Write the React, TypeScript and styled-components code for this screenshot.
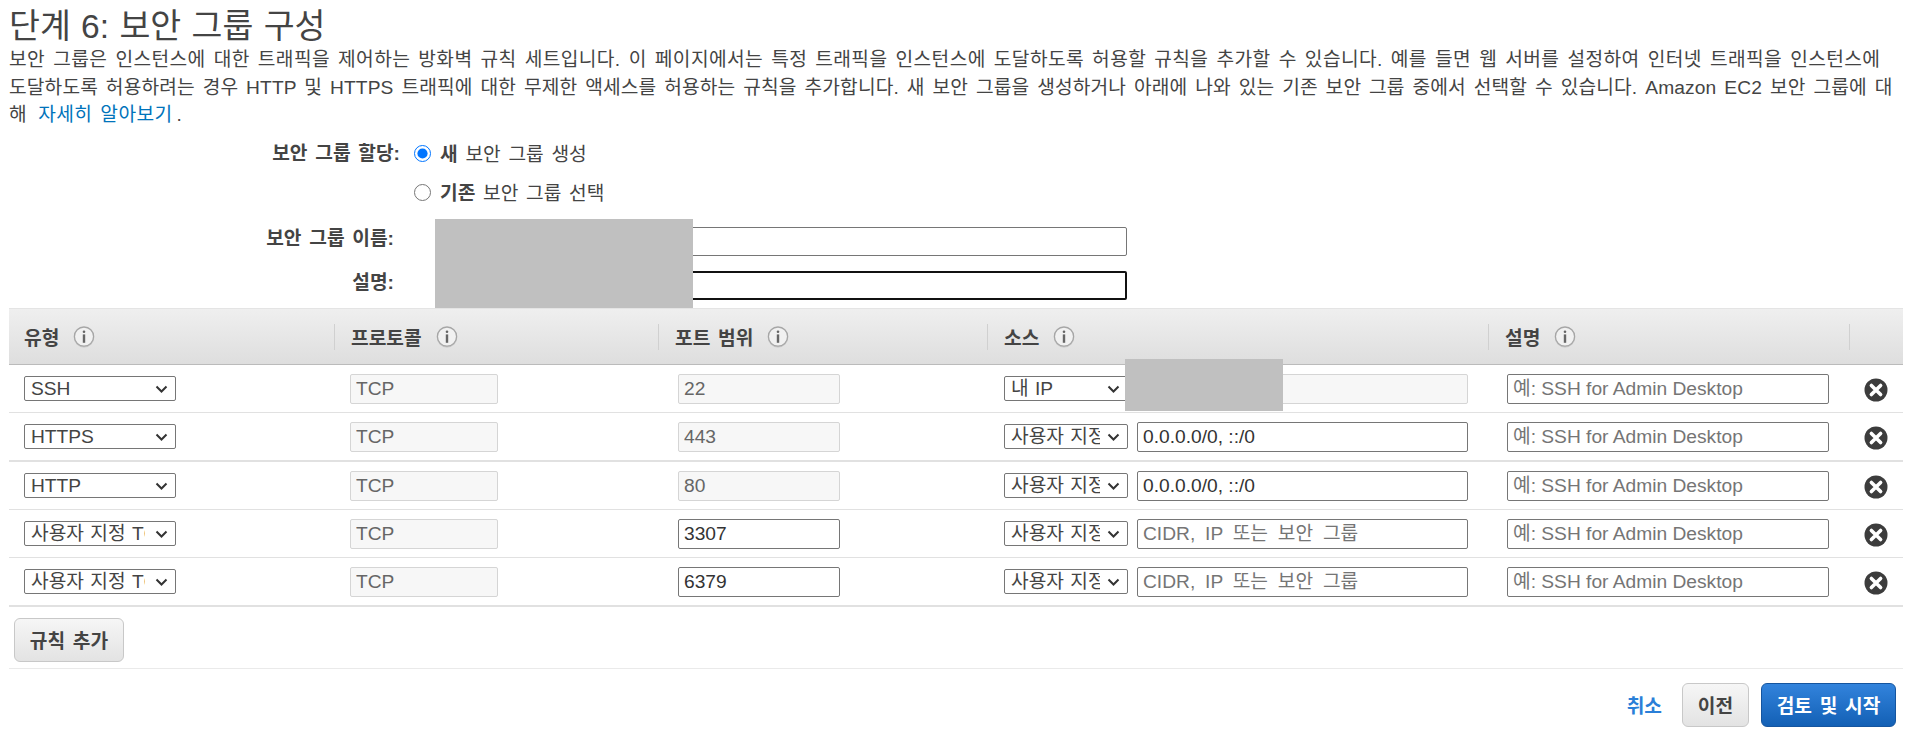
import React from "react";
import styled, { createGlobalStyle } from "styled-components";

const FONT = `"Liberation Sans", "Noto Sans CJK KR", sans-serif`;

const CHEVRON =
  "url(\"data:image/svg+xml,%3Csvg xmlns='http://www.w3.org/2000/svg' width='13' height='8' viewBox='0 0 13 8'%3E%3Cpath d='M1.5 1.5 L6.5 6.5 L11.5 1.5' fill='none' stroke='%23333' stroke-width='2'/%3E%3C/svg%3E\")";

const Global = createGlobalStyle`
  html, body { margin: 0; padding: 0; background: #fff; }
  body { font-family: ${FONT}; color: #444; overflow: hidden; }
`;

const Page = styled.div`
  position: relative;
  width: 1913px;
  height: 736px;
  padding: 0 10px 0 9px;
  box-sizing: border-box;
`;

const Title = styled.h1`
  margin: 0;
  padding: 7px 0 0;
  height: 46px;
  box-sizing: border-box;
  font-size: 33.6px;
  line-height: 40px;
  font-weight: 400;
  word-spacing: 1px;
  color: #444;
  white-space: nowrap;
`;

const Intro = styled.div`
  font-size: 19.2px;
  line-height: 27.5px;
  word-spacing: 2.4px;
  white-space: nowrap;
  color: #444;
`;

const IntroLine = styled.p<{ $track: number }>`
  margin: 0;
  letter-spacing: ${(p) => p.$track}px;
`;

const DocLink = styled.a`
  margin: 0 4px 0 3px;
  color: #0073bb;
  text-decoration: none;
`;

const FormGrid = styled.div`
  display: grid;
  grid-template-columns: 391px 1fr;
  column-gap: 14px;
  margin-top: 5px;
`;

const FieldLabel = styled.div<{ $tall?: boolean; $inset?: number }>`
  font-size: 19.2px;
  font-weight: 700;
  word-spacing: 2.4px;
  text-align: right;
  color: #444;
  white-space: nowrap;
  line-height: ${(p) => (p.$tall ? "40px" : "39px")};
  height: ${(p) => (p.$tall ? "44px" : "39px")};
  padding-right: ${(p) => p.$inset ?? 0}px;
`;

const RadioRow = styled.label<{ $last?: boolean }>`
  display: flex;
  align-items: center;
  gap: 9px;
  height: 39px;
  margin-bottom: ${(p) => (p.$last ? "7.5px" : "0")};
  font-size: 19.2px;
  word-spacing: 2.4px;
  color: #444;
`;

const Radio = styled.input`
  width: 17px;
  height: 17px;
  margin: 0;
  accent-color: #0075ff;
`;

const NameInput = styled.input<{ $focused?: boolean }>`
  box-sizing: border-box;
  display: block;
  width: 683px;
  height: 29px;
  margin: 8px 0 7px 30px;
  padding: 0 8px;
  background: #fff;
  border-radius: 2px;
  border: ${(p) => (p.$focused ? "2px solid #111" : "1px solid #767676")};
  font: 19.2px ${FONT};
  outline: none;
`;

const Redaction = styled.div<{ $x: number; $y: number; $w: number; $h: number }>`
  position: absolute;
  left: ${(p) => p.$x}px;
  top: ${(p) => p.$y}px;
  width: ${(p) => p.$w}px;
  height: ${(p) => p.$h}px;
  background: #c0c0c0;
`;

const COLUMNS = "325px 324px 329px 501px 361px 1fr";

const Header = styled.div`
  display: grid;
  grid-template-columns: ${COLUMNS};
  height: 57px;
  box-sizing: border-box;
  margin-top: 1px;
  background: linear-gradient(#efefef, #dedede);
  border-bottom: 1px solid #bbb;
  border-top: 1px solid #e4e4e4;
  align-items: center;
`;

const HeaderCell = styled.div<{ $first?: boolean }>`
  display: flex;
  align-items: center;
  gap: 14px;
  height: 26px;
  padding-left: ${(p) => (p.$first ? 15 : 16)}px;
  border-left: ${(p) => (p.$first ? "none" : "1px solid #d0d0d0")};
  font-size: 19.2px;
  font-weight: 700;
  word-spacing: 2.4px;
  color: #444;
  white-space: nowrap;
`;

const Row = styled.div<{ $height: number; $thick?: boolean }>`
  display: grid;
  grid-template-columns: ${COLUMNS};
  height: ${(p) => p.$height}px;
  box-sizing: border-box;
  align-items: center;
  border-bottom: ${(p) => (p.$thick ? "2px solid #e1e1e1" : "1px solid #e1e1e1")};
`;

const Cell = styled.div<{ $pad: number }>`
  display: flex;
  align-items: center;
  gap: 9px;
  padding-left: ${(p) => p.$pad}px;
`;

const Select = styled.select<{ $w: number; $clip: number }>`
  box-sizing: border-box;
  width: ${(p) => p.$w}px;
  height: 25px;
  padding: 0 ${(p) => p.$clip}px 0 6px;
  font: 19.2px ${FONT};
  word-spacing: 1px;
  color: #444;
  appearance: none;
  background: #fff ${CHEVRON} no-repeat right 7px center;
  border: 1px solid #767676;
  border-radius: 2px;
  outline: none;
`;

const TextInput = styled.input<{ $w: number; $locked?: boolean; $spread?: boolean }>`
  box-sizing: border-box;
  width: ${(p) => p.$w}px;
  height: 30px;
  padding: 0 5px;
  font: 19.2px ${FONT};
  color: ${(p) => (p.$locked ? "#666" : "#333")};
  background: ${(p) => (p.$locked ? "#f7f7f7" : "#fff")};
  border: 1px solid ${(p) => (p.$locked ? "#d5d5d5" : "#767676")};
  border-radius: 2px;
  outline: none;
  &::placeholder {
    color: #757575;
    opacity: 1;
    word-spacing: ${(p) => (p.$spread ? "4.5px" : "0")};
  }
`;

const RemoveButton = styled.button`
  display: flex;
  align-items: center;
  justify-content: center;
  width: 24px;
  height: 24px;
  margin-top: 2px;
  padding: 0;
  border: none;
  background: none;
`;

const RuleBar = styled.div`
  height: 62px;
  box-sizing: border-box;
  padding: 11px 0 0 5px;
  border-bottom: 1px solid #eaeaea;
`;

const GreyButton = styled.button<{ $w: number }>`
  box-sizing: border-box;
  width: ${(p) => p.$w}px;
  height: 44px;
  padding: 0;
  border: 1px solid #c8c8c8;
  border-radius: 6px;
  background: linear-gradient(#f6f6f6, #e3e3e3);
  font: 700 19.2px ${FONT};
  word-spacing: 2.4px;
  color: #444;
`;

const Footer = styled.div`
  display: flex;
  justify-content: flex-end;
  align-items: center;
  gap: 12px;
  padding: 14px 7px 0 0;
`;

const CancelLink = styled.a`
  margin-right: 8px;
  font-size: 19.2px;
  font-weight: 700;
  color: #2a7fd8;
  text-decoration: none;
`;

const PrimaryButton = styled.button`
  box-sizing: border-box;
  width: 135px;
  height: 44px;
  padding: 0;
  border: 1px solid #15559f;
  border-radius: 6px;
  background: linear-gradient(#3283dc, #1360b5);
  font: 700 19.2px ${FONT};
  word-spacing: 2.4px;
  color: #fff;
`;

const InfoIcon = () => (
  <svg width="22" height="24" viewBox="0 0 22 24" aria-hidden="true">
    <circle cx="11" cy="12.4" r="10.2" fill="#c4c4c4" />
    <circle cx="11" cy="11.6" r="9.6" fill="#f1f1f1" stroke="#a6a6a6" strokeWidth="1.3" />
    <circle cx="11" cy="6.8" r="1.3" fill="#666" />
    <rect x="9.8" y="9.4" width="2.4" height="8.4" fill="#666" />
  </svg>
);

const RemoveIcon = () => (
  <svg width="24" height="24" viewBox="0 0 24 24" aria-hidden="true">
    <circle cx="12" cy="12" r="11.5" fill="#3c3c3c" />
    <path d="M7.4 7.4 L16.6 16.6 M16.6 7.4 L7.4 16.6" stroke="#fff" strokeWidth="3.6" strokeLinecap="round" />
  </svg>
);

type Rule = {
  type: string;
  port: string;
  portLocked: boolean;
  source: string;
  cidr: string;
  height: number;
  thick?: boolean;
};

const TYPES = ["SSH", "HTTPS", "HTTP", "사용자 지정 TCP"];
const SOURCES = ["내 IP", "사용자 지정"];

const RULES: Rule[] = [
  { type: "SSH", port: "22", portLocked: true, source: "내 IP", cidr: "", height: 48 },
  { type: "HTTPS", port: "443", portLocked: true, source: "사용자 지정", cidr: "0.0.0.0/0, ::/0", height: 49, thick: true },
  { type: "HTTP", port: "80", portLocked: true, source: "사용자 지정", cidr: "0.0.0.0/0, ::/0", height: 48 },
  { type: "사용자 지정 TCP", port: "3307", portLocked: false, source: "사용자 지정", cidr: "", height: 48 },
  { type: "사용자 지정 TCP", port: "6379", portLocked: false, source: "사용자 지정", cidr: "", height: 49, thick: true },
];

const HEADERS = ["유형", "프로토콜", "포트 범위", "소스", "설명"];

export default function App() {
  return (
    <Page>
      <Global />
      <Title>단계 6: 보안 그룹 구성</Title>
      <Intro>
        <IntroLine $track={0.38}>
          보안 그룹은 인스턴스에 대한 트래픽을 제어하는 방화벽 규칙 세트입니다. 이 페이지에서는 특정 트래픽을 인스턴스에 도달하도록 허용할 규칙을 추가할 수 있습니다. 예를 들면 웹 서버를 설정하여 인터넷 트래픽을 인스턴스에
        </IntroLine>
        <IntroLine $track={0.14}>
          도달하도록 허용하려는 경우 HTTP 및 HTTPS 트래픽에 대한 무제한 액세스를 허용하는 규칙을 추가합니다. 새 보안 그룹을 생성하거나 아래에 나와 있는 기존 보안 그룹 중에서 선택할 수 있습니다. Amazon EC2 보안 그룹에 대
        </IntroLine>
        <IntroLine $track={0.38}>
          해 <DocLink href="#">자세히 알아보기</DocLink>.
        </IntroLine>
      </Intro>
      <FormGrid>
        <FieldLabel>보안 그룹 할당:</FieldLabel>
        <RadioRow>
          <Radio type="radio" name="sg" defaultChecked />
          <span><b>새</b> 보안 그룹 생성</span>
        </RadioRow>
        <div />
        <RadioRow $last>
          <Radio type="radio" name="sg" />
          <span><b>기존</b> 보안 그룹 선택</span>
        </RadioRow>
        <FieldLabel $tall $inset={6}>보안 그룹 이름:</FieldLabel>
        <NameInput type="text" />
        <FieldLabel $tall $inset={6}>설명:</FieldLabel>
        <NameInput type="text" $focused />
      </FormGrid>
      <Header>
        {HEADERS.map((h, i) => (
          <HeaderCell key={h} $first={i === 0}>
            {h}
            <InfoIcon />
          </HeaderCell>
        ))}
        <HeaderCell />
      </Header>
      {RULES.map((r, i) => (
        <Row key={i} $height={r.height} $thick={r.thick}>
          <Cell $pad={15}>
            <Select $w={152} $clip={30} defaultValue={r.type}>
              {TYPES.map((t) => <option key={t}>{t}</option>)}
            </Select>
          </Cell>
          <Cell $pad={16}>
            <TextInput $w={148} $locked readOnly value="TCP" />
          </Cell>
          <Cell $pad={20}>
            <TextInput $w={162} $locked={r.portLocked} readOnly value={r.port} />
          </Cell>
          <Cell $pad={17}>
            <Select $w={124} $clip={27} defaultValue={r.source}>
              {SOURCES.map((t) => <option key={t}>{t}</option>)}
            </Select>
            <TextInput
              $w={331}
              $locked={i === 0}
              $spread
              readOnly
              value={r.cidr}
              placeholder={i === 0 ? "" : "CIDR, IP 또는 보안 그룹"}
            />
          </Cell>
          <Cell $pad={19}>
            <TextInput $w={322} placeholder="예: SSH for Admin Desktop" />
          </Cell>
          <Cell $pad={15}>
            <RemoveButton aria-label="삭제"><RemoveIcon /></RemoveButton>
          </Cell>
        </Row>
      ))}
      <RuleBar>
        <GreyButton $w={110}>규칙 추가</GreyButton>
      </RuleBar>
      <Footer>
        <CancelLink href="#">취소</CancelLink>
        <GreyButton $w={67}>이전</GreyButton>
        <PrimaryButton>검토 및 시작</PrimaryButton>
      </Footer>
      <Redaction $x={435} $y={219} $w={258} $h={89} />
      <Redaction $x={1125} $y={359} $w={158} $h={52} />
    </Page>
  );
}
